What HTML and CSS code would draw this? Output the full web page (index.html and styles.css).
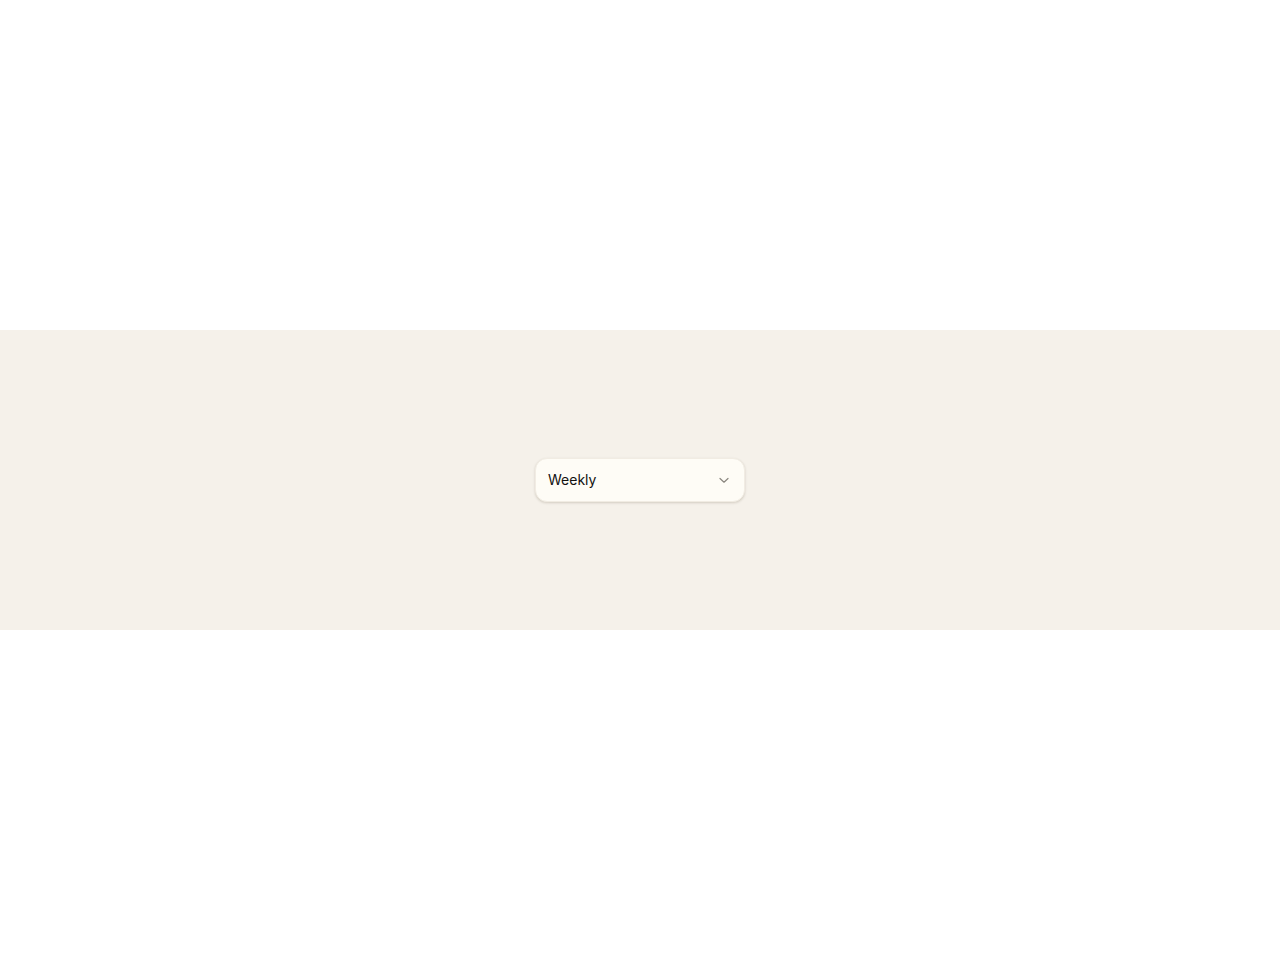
FILE: index.html
```html
<!DOCTYPE html>
<html lang="en">
<head>
<meta charset="utf-8">
<link rel="stylesheet" href="styles.css">
</head>
<body>
<main class="page">
  <section class="band">
    <button class="select" type="button">
      <span class="select-label">Weekly</span>
      <svg class="chevron" width="12" height="12" viewBox="0 0 12 12" fill="none"><path d="M2 4.5 6 8.2l4-3.7" stroke="#8a867f" stroke-width="1.2" stroke-linecap="round" stroke-linejoin="round"/></svg>
    </button>
  </section>
</main>
</body>
</html>
```
FILE: styles.css
```css
html, body { margin: 0; padding: 0; background: #ffffff; }
.page {
  height: 960px;
  display: flex;
  flex-direction: column;
  justify-content: center;
}
.band {
  height: 300px;
  background: #f5f1ea;
  display: flex;
  align-items: center;
  justify-content: center;
}
.select {
  width: 210px;
  height: 44px;
  box-sizing: border-box;
  display: flex;
  align-items: center;
  justify-content: space-between;
  padding: 0 14px 0 12px;
  background: #fefcf6;
  border: 1px solid #f1ece3;
  border-radius: 12px;
  box-shadow: 0 1px 3px rgba(60, 45, 20, 0.12), 0 1px 2px rgba(60, 45, 20, 0.06);
  font-family: Inter, "Noto Sans", sans-serif;
  font-size: 14px;
  color: #121110;
  cursor: pointer;
}
.select-label { line-height: 20px; }
.chevron { display: block; }
```
